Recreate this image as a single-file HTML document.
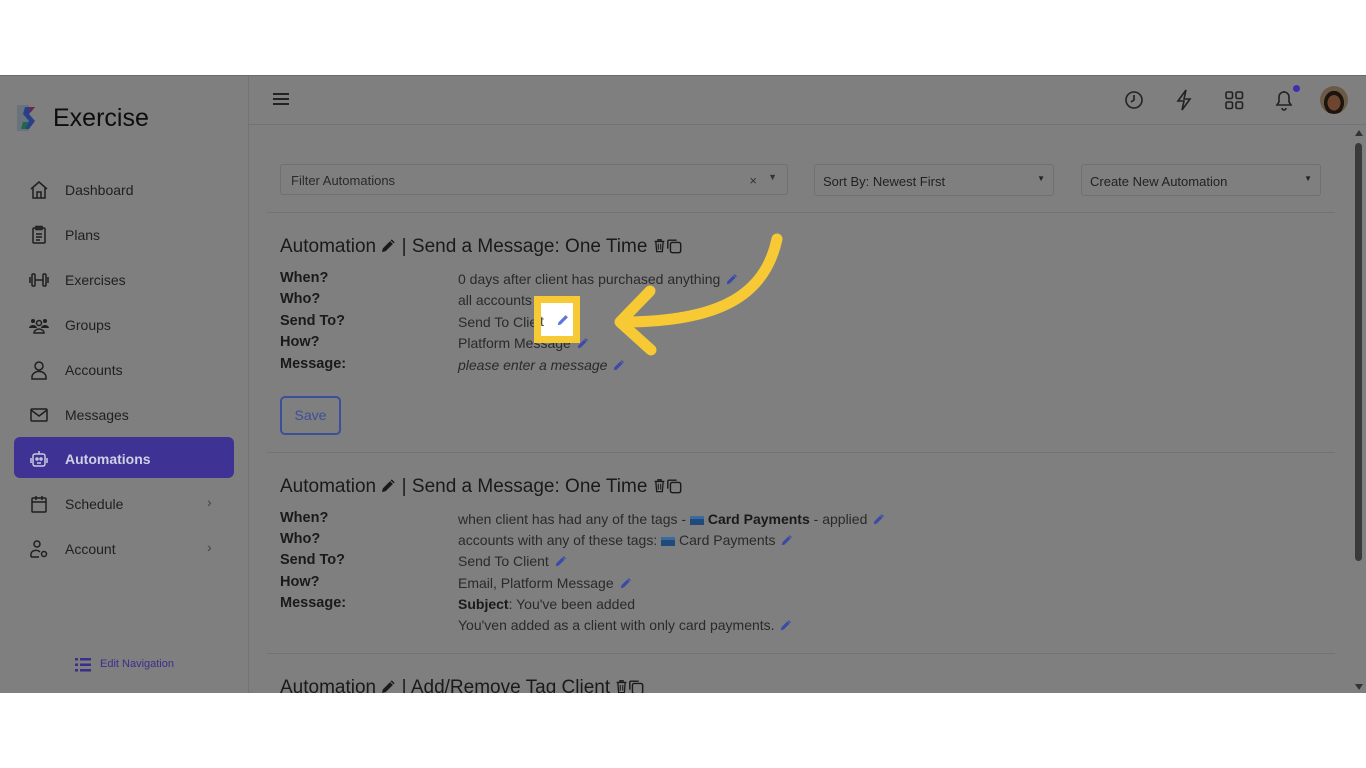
<!DOCTYPE html>
<html><head><meta charset="utf-8"><style>
*{margin:0;padding:0;box-sizing:border-box}
body{width:1366px;height:768px;background:#fff;font-family:"Liberation Sans",sans-serif;position:relative;overflow:hidden}
.app{position:absolute;left:0;top:75px;width:1366px;height:618px;background:#7f7f7f;overflow:hidden;border-top:1px solid #6a6a6a}
.side{position:absolute;left:0;top:0;width:249px;height:618px;border-right:1px solid #737373}
.logo{position:absolute;left:53px;top:28px;font-size:25px;color:#0d0d0d}
.nav{position:absolute;left:65px;font-size:14px;color:#1f1f1f}
.ic{position:absolute;left:29px;width:20px;height:20px}
.act{position:absolute;left:14px;top:361px;width:220px;height:41px;background:#3e3294;border-radius:6px}
.a{position:absolute;white-space:nowrap;color:#1a1a1a}
.lab{font-weight:bold;font-size:14.5px}
.val{font-size:14px;color:#2a2a2a}
.h{font-size:19px;color:#1a1a1a}
.box{position:absolute;border:1px solid #707070;border-radius:3px;background:#7f7f7f;font-size:13px;color:#222}
.hr{position:absolute;left:267px;width:1068px;height:1px;background:#737373}
.p{display:inline-block;width:12px;height:12px;vertical-align:-1px;margin-left:2px}
.hp{display:inline-block;width:15px;height:15px;vertical-align:-1px}
</style></head><body>
<svg width="0" height="0" style="position:absolute"><defs>
<symbol id="pen" viewBox="0 0 16 16"><path d="M11.5 1.5l3 3L5 14l-4 1 1-4z" fill="currentColor"/><path d="M10 3l3 3" stroke="#7f7f7f" stroke-width="1"/></symbol>
<symbol id="trash" viewBox="0 0 16 18"><path d="M2 4h12M6 4V2h4v2M3.5 4.5l1 12h7l1-12" fill="none" stroke="#1a1a1a" stroke-width="1.6"/><path d="M6.5 7v7M9.5 7v7" stroke="#1a1a1a" stroke-width="1.3"/></symbol>
<symbol id="copy" viewBox="0 0 18 18"><rect x="5" y="5" width="11.5" height="11.5" rx="2" fill="none" stroke="#1a1a1a" stroke-width="1.6"/><path d="M12 2.5H3.5a1.5 1.5 0 00-1.5 1.5V12" fill="none" stroke="#1a1a1a" stroke-width="1.6"/></symbol>
</defs></svg>
<div class="app">
 <div class="side">
  <svg style="position:absolute;left:17px;top:29px" width="26" height="26" viewBox="0 0 26 26"><rect x="0" y="0" width="12" height="26" fill="#5a6a7a" opacity=".6"/><path d="M8 2h10l-6 7 6 7-6 8H6l6-8-6-7z" fill="#2a3f8a"/><path d="M6 17h6l-4 7H4z" fill="#1d6a4a"/><path d="M12 2h6l-4 5z" fill="#7a2048"/></svg>
  <div class="logo">Exercise</div>
  <svg class="ic" style="top:104px" viewBox="0 0 20 20" fill="none" stroke="#1f1f1f" stroke-width="1.5"><path d="M2 9l8-7 8 7M4 8v10h12V8M8 18v-6h4v6"/></svg><div class="nav" style="top:106px">Dashboard</div>
  <svg class="ic" style="top:149px" viewBox="0 0 20 20" fill="none" stroke="#1f1f1f" stroke-width="1.5"><rect x="4" y="3" width="12" height="15" rx="1"/><rect x="7" y="1.5" width="6" height="3"/><path d="M7 9h6M7 12h6M7 15h4"/></svg><div class="nav" style="top:151px">Plans</div>
  <svg class="ic" style="top:194px" viewBox="0 0 20 20" fill="none" stroke="#1f1f1f" stroke-width="1.5"><rect x="3" y="4" width="3" height="12" rx="1"/><rect x="14" y="4" width="3" height="12" rx="1"/><path d="M6 10h8M1 7v6M19 7v6"/></svg><div class="nav" style="top:196px">Exercises</div>
  <svg class="ic" style="top:239px" viewBox="0 0 20 20" fill="#1f1f1f"><circle cx="4" cy="6" r="2"/><circle cx="16" cy="6" r="2"/><circle cx="10" cy="8" r="2.5" fill="none" stroke="#1f1f1f" stroke-width="1.5"/><path d="M0 13a4 3 0 018 0zM12 13a4 3 0 018 0z"/><path d="M5 18a5 4 0 0110 0z" fill="none" stroke="#1f1f1f" stroke-width="1.5"/></svg><div class="nav" style="top:241px">Groups</div>
  <svg class="ic" style="top:284px" viewBox="0 0 20 20" fill="none" stroke="#1f1f1f" stroke-width="1.5"><circle cx="10" cy="6" r="4"/><path d="M3 19v-2a5 4 0 0114 0v2z"/></svg><div class="nav" style="top:286px">Accounts</div>
  <svg class="ic" style="top:329px" viewBox="0 0 20 20" fill="none" stroke="#1f1f1f" stroke-width="1.5"><rect x="2" y="4" width="16" height="12" rx="1"/><path d="M2 5l8 6 8-6"/></svg><div class="nav" style="top:331px">Messages</div>
  <div class="act"></div>
  <svg class="ic" style="top:373px" viewBox="0 0 20 20" fill="none" stroke="#c9c9e0" stroke-width="1.5"><rect x="4" y="5" width="12" height="12" rx="2"/><circle cx="8" cy="10" r="1"/><circle cx="12" cy="10" r="1"/><path d="M8 14h4M10 2v3M2 9v5M18 9v5"/></svg><div class="nav" style="top:375px;color:#d0d0e6;font-weight:bold">Automations</div>
  <svg class="ic" style="top:418px" viewBox="0 0 20 20" fill="none" stroke="#1f1f1f" stroke-width="1.5"><rect x="3" y="4" width="14" height="14" rx="1"/><path d="M3 8h14M7 2v4M13 2v4"/></svg><div class="nav" style="top:420px">Schedule</div><div class="nav" style="left:207px;top:418px;color:#444">›</div>
  <svg class="ic" style="top:463px" viewBox="0 0 20 20" fill="none" stroke="#1f1f1f" stroke-width="1.5"><circle cx="8" cy="5" r="3"/><path d="M2 18v-2a5 4 0 019-3M2 18h8"/><circle cx="15" cy="15" r="2.5"/></svg><div class="nav" style="top:465px">Account</div><div class="nav" style="left:207px;top:463px;color:#444">›</div>
  <svg style="position:absolute;left:75px;top:582px" width="16" height="14" viewBox="0 0 16 14" fill="#3a2e8c"><rect x="0" y="0" width="3" height="2.5"/><rect x="5" y="0" width="11" height="2.5"/><rect x="0" y="5.5" width="3" height="2.5"/><rect x="5" y="5.5" width="11" height="2.5"/><rect x="0" y="11" width="3" height="2.5"/><rect x="5" y="11" width="11" height="2.5"/></svg>
  <div class="a" style="left:100px;top:582px;font-size:11px;color:#3a2e8c">Edit Navigation</div>
 </div>
 <div style="position:absolute;left:249px;top:48px;width:1117px;height:1px;background:#737373"></div>
 <div style="position:absolute;left:273px;top:17px;width:16px;height:2px;background:#222;box-shadow:0 5px 0 #222,0 10px 0 #222"></div>
 <svg style="position:absolute;left:1124px;top:14px" width="20" height="20" viewBox="0 0 20 20" fill="none" stroke="#222" stroke-width="1.6"><circle cx="10" cy="10" r="8"/><path d="M10 5v5l-3 2"/></svg>
 <svg style="position:absolute;left:1175px;top:13px" width="18" height="22" viewBox="0 0 18 22" fill="none" stroke="#222" stroke-width="1.6"><path d="M11 1L3 12h6l-2 9 8-11H9z"/></svg>
 <svg style="position:absolute;left:1225px;top:15px" width="19" height="19" viewBox="0 0 19 19" fill="none" stroke="#222" stroke-width="1.6"><rect x="1" y="1" width="6.5" height="6.5" rx="1.5"/><rect x="11" y="1" width="6.5" height="6.5" rx="1.5"/><rect x="1" y="11" width="6.5" height="6.5" rx="1.5"/><rect x="11" y="11" width="6.5" height="6.5" rx="1.5"/></svg>
 <svg style="position:absolute;left:1274px;top:13px" width="20" height="22" viewBox="0 0 20 22" fill="none" stroke="#222" stroke-width="1.6"><path d="M3 16h14l-2-3V8a5 5 0 00-10 0v5zM8 19a2 2 0 004 0M10 2v1"/></svg>
 <div style="position:absolute;left:1293px;top:9px;width:7px;height:7px;border-radius:50%;background:#3b2fb0"></div>
 <div style="position:absolute;left:1320px;top:10px;width:28px;height:28px;border-radius:50%;background:radial-gradient(ellipse at 50% 60%,#6e4630 0 32%,#1e140e 33% 50%,#6b5a48 51%)"></div>
 <div style="position:absolute;left:1355px;top:54px;width:0;height:0;border:4px solid transparent;border-bottom:6px solid #333;border-top:0"></div>
 <div style="position:absolute;left:1355px;top:67px;width:7px;height:418px;border-radius:4px;background:#3a3a3a"></div>
 <div style="position:absolute;left:1355px;top:608px;width:0;height:0;border:4px solid transparent;border-top:6px solid #333;border-bottom:0"></div>

 <div class="box" style="left:280px;top:88px;width:508px;height:31px;padding:8px 10px;color:#2a2a2a">Filter Automations<span style="position:absolute;right:30px;top:8px;color:#333">×</span><span style="position:absolute;right:10px;top:7px;font-size:9px;color:#333">▼</span></div>
 <div class="box" style="left:814px;top:88px;width:240px;height:32px;padding:9px 8px">Sort By: Newest First<span style="position:absolute;right:8px;top:9px;font-size:8px">▼</span></div>
 <div class="box" style="left:1081px;top:88px;width:240px;height:32px;padding:9px 8px">Create New Automation<span style="position:absolute;right:8px;top:9px;font-size:8px">▼</span></div>
 <div class="hr" style="top:136px"></div>

 <div class="a h" style="left:280px;top:160px">Automation <svg class="hp" style="color:#1a1a1a"><use href="#pen"/></svg> | Send a Message: One Time <svg style="width:13px;height:15px;vertical-align:-1px"><use href="#trash"/></svg><svg style="width:16px;height:16px;vertical-align:-2px"><use href="#copy"/></svg></div>
 <div class="a lab" style="left:280px;top:194px">When?</div><div class="a val" style="left:458px;top:195px">0 days after client has purchased anything <svg class="p" style="color:#3a4aa8"><use href="#pen"/></svg></div>
 <div class="a lab" style="left:280px;top:215px">Who?</div><div class="a val" style="left:458px;top:216px">all accounts</div>
 <div class="a lab" style="left:280px;top:237px">Send To?</div><div class="a val" style="left:458px;top:238px">Send To Client</div>
 <div class="a lab" style="left:280px;top:258px">How?</div><div class="a val" style="left:458px;top:259px">Platform Message <svg class="p" style="color:#3a4aa8"><use href="#pen"/></svg></div>
 <div class="a lab" style="left:280px;top:280px">Message:</div><div class="a val" style="left:458px;top:281px;font-style:italic">please enter a message <svg class="p" style="color:#3a4aa8"><use href="#pen"/></svg></div>
 <div style="position:absolute;left:280px;top:320px;width:61px;height:39px;border:2px solid #3c4f98;border-radius:5px;color:#3c4f98;font-size:14px;text-align:center;line-height:35px">Save</div>
 <div class="hr" style="top:376px"></div>

 <div class="a h" style="left:280px;top:400px">Automation <svg class="hp" style="color:#1a1a1a"><use href="#pen"/></svg> | Send a Message: One Time <svg style="width:13px;height:15px;vertical-align:-1px"><use href="#trash"/></svg><svg style="width:16px;height:16px;vertical-align:-2px"><use href="#copy"/></svg></div>
 <div class="a lab" style="left:280px;top:434px">When?</div><div class="a val" style="left:458px;top:435px">when client has had any of the tags - <span style="display:inline-block;width:14px;height:9px;background:#1f4a7a;border-top:3px solid #3a6aa0;vertical-align:-1px"></span> <b style="color:#1a1a1a">Card Payments</b> - applied <svg class="p" style="color:#3a4aa8"><use href="#pen"/></svg></div>
 <div class="a lab" style="left:280px;top:455px">Who?</div><div class="a val" style="left:458px;top:456px">accounts with any of these tags: <span style="display:inline-block;width:14px;height:9px;background:#1f4a7a;border-top:3px solid #3a6aa0;vertical-align:-1px"></span> Card Payments <svg class="p" style="color:#3a4aa8"><use href="#pen"/></svg></div>
 <div class="a lab" style="left:280px;top:476px">Send To?</div><div class="a val" style="left:458px;top:477px">Send To Client <svg class="p" style="color:#3a4aa8"><use href="#pen"/></svg></div>
 <div class="a lab" style="left:280px;top:498px">How?</div><div class="a val" style="left:458px;top:499px">Email, Platform Message <svg class="p" style="color:#3a4aa8"><use href="#pen"/></svg></div>
 <div class="a lab" style="left:280px;top:519px">Message:</div><div class="a val" style="left:458px;top:520px"><b style="color:#1a1a1a">Subject</b>: You've been added</div>
 <div class="a val" style="left:458px;top:541px">You'ven added as a client with only card payments. <svg class="p" style="color:#3a4aa8"><use href="#pen"/></svg></div>
 <div class="hr" style="top:577px"></div>
 <div class="a h" style="left:280px;top:601px">Automation <svg class="hp" style="color:#1a1a1a"><use href="#pen"/></svg> | Add/Remove Tag Client <svg style="width:13px;height:15px;vertical-align:-1px"><use href="#trash"/></svg><svg style="width:16px;height:16px;vertical-align:-2px"><use href="#copy"/></svg></div>
</div>

<div style="position:absolute;left:534px;top:296px;width:46px;height:47px;border:7px solid #f6c935;background:#fff;overflow:hidden">
 <div style="position:absolute;left:-1px;top:10px;font-size:14px;color:#444">t</div>
 <svg style="position:absolute;left:16px;top:11px;width:12px;height:12px;color:#5b74e0"><use href="#pen"/></svg>
</div>
<svg style="position:absolute;left:0;top:0" width="1366" height="768" viewBox="0 0 1366 768" fill="none" stroke="#f6c935" stroke-width="11" stroke-linecap="round" stroke-linejoin="round">
 <path d="M777 239C765 295 720 322 622 322"/>
 <path d="M650 291L620 322L651 350"/>
</svg>
</body></html>
